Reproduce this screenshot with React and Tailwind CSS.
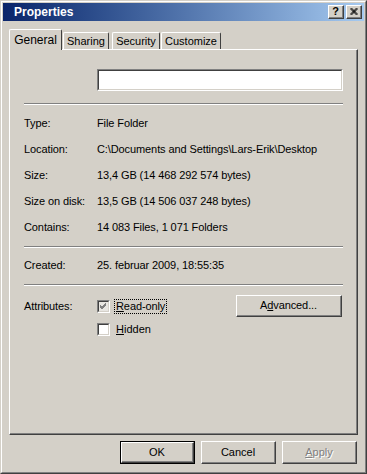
import React from "react";

const font = { fontFamily: '"Liberation Sans", Arial, sans-serif' };

function Bevel({ children, className = "" }) {
  // classic raised 3d frame
  return (
    <div className={`border-t border-l border-t-white border-l-white border-r border-b border-r-[#404040] border-b-[#404040] ${className}`}>
      <div className="h-full w-full border-r border-b border-r-[#808080] border-b-[#808080] flex items-center justify-center">
        {children}
      </div>
    </div>
  );
}

function Button({ children, def, disabled, className = "" }) {
  const inner = (
    <Bevel className="h-full w-full">
      <span className={disabled ? "text-[#808080] [text-shadow:1px_1px_0_#ffffff]" : "text-black"}>{children}</span>
    </Bevel>
  );
  if (def) {
    return <div className={`border border-black ${className}`}>{inner}</div>;
  }
  return <div className={className}>{inner}</div>;
}

function Sunken({ children, className = "" }) {
  return (
    <div className={`border-t border-l border-t-[#808080] border-l-[#808080] border-r border-b border-r-white border-b-white ${className}`}>
      <div className="h-full w-full border-t border-l border-t-[#404040] border-l-[#404040] border-r border-b border-r-[#d4d0c8] border-b-[#d4d0c8]">
        {children}
      </div>
    </div>
  );
}

function Separator({ className = "" }) {
  return <div className={`h-[2px] border-t border-t-[#808080] border-b border-b-white ${className}`} />;
}

function Row({ label, value }) {
  return (
    <div className="flex h-[26px] items-center pl-[14px] tracking-[-0.1px]">
      <div className="w-[73px]">{label}</div>
      <div>{value}</div>
    </div>
  );
}

function Checkbox({ grayed }) {
  return (
    <Sunken className="w-[13px] h-[13px]">
      <div className={`h-full w-full ${grayed ? "bg-[#e8e6e2]" : "bg-white"} flex items-center justify-center`}>
        {grayed && (
          <svg width="7" height="7" viewBox="0 0 7 7">
            <path d="M0 2 L2 4 L6 0 M0 3 L2 5 L6 1 M0 4 L2 6 L6 2" stroke="#808080" strokeWidth="1" fill="none" shapeRendering="crispEdges" />
          </svg>
        )}
      </div>
    </Sunken>
  );
}

function Tab({ children, active, width }) {
  if (active) {
    return (
      <div
        className="relative z-10 h-[21px] -mb-px bg-[#d4d0c8] border-t border-l border-t-white border-l-white border-r border-r-[#404040] rounded-tl-[2px] rounded-tr-[2px] flex items-start justify-center pt-[4px] text-[12px]"
        style={{ width }}
      >
        {children}
      </div>
    );
  }
  return (
    <div
      className="h-[17px] bg-[#d4d0c8] border-t border-l border-t-white border-l-white border-r border-r-[#404040] rounded-tl-[2px] rounded-tr-[2px] flex items-start justify-center pt-[2px]"
      style={{ width }}
    >
      {children}
    </div>
  );
}

export default function App() {
  return (
    <div className="w-[367px] h-[474px] bg-[#d4d0c8] text-[11px] leading-[13px] text-black" style={font}>
      <div className="h-full w-full border-t border-l border-t-[#d4d0c8] border-l-[#d4d0c8] border-r border-b border-r-[#404040] border-b-[#404040]">
        <div className="h-full w-full border-t border-l border-t-white border-l-white border-r border-b border-r-[#808080] border-b-[#808080] p-px flex flex-col">
          {/* title bar */}
          <div className="h-[18px] flex items-center justify-between bg-gradient-to-r from-[#0a246a] to-[#a6caf0] pl-[11px] pr-[2px]">
            <span className="text-white font-bold text-[12px]">Properties</span>
            <div className="flex gap-[2px]">
              <Bevel className="w-[16px] h-[14px] bg-[#d4d0c8]">
                <span className="font-bold text-[11px] leading-none text-black">?</span>
              </Bevel>
              <Bevel className="w-[16px] h-[14px] bg-[#d4d0c8]">
                <svg width="8" height="7" viewBox="0 0 8 7">
                  <path d="M0.5 0 L7.5 7 M1.5 0 L7.5 6 M0.5 1 L6.5 7 M7.5 0 L0.5 7 M6.5 0 L0.5 6 M7.5 1 L1.5 7" stroke="#000" strokeWidth="0.8" fill="none" />
                </svg>
              </Bevel>
            </div>
          </div>

          {/* tabs */}
          <div className="mt-[8px] ml-[6px] flex items-end h-[20px] gap-px">
            <Tab active width={53}>General</Tab>
            <Tab width={46}>Sharing</Tab>
            <div className="w-px" />
            <Tab width={48}>Security</Tab>
            <Tab width={60}>Customize</Tab>
          </div>

          {/* panel */}
          <div className="ml-[6px] w-[349px] h-[386px] border-t border-l border-t-white border-l-white border-r border-b border-r-[#404040] border-b-[#404040]">
            <div className="h-full w-full border-r border-b border-r-[#808080] border-b-[#808080] flex flex-col">
              <Sunken className="mt-[19px] ml-[87px] w-[246px] h-[22px]">
                <div className="h-full w-full bg-white" />
              </Sunken>
              <Separator className="mt-[12px] ml-[14px] w-[319px]" />
              <div className="mt-[5px]">
                <Row label="Type:" value="File Folder" />
                <Row label="Location:" value="C:\Documents and Settings\Lars-Erik\Desktop" />
                <Row label="Size:" value="13,4 GB (14 468 292 574 bytes)" />
                <Row label="Size on disk:" value="13,5 GB (14 506 037 248 bytes)" />
                <Row label="Contains:" value="14 083 Files, 1 071 Folders" />
              </div>
              <Separator className="mt-[6px] ml-[14px] w-[319px]" />
              <div className="mt-[4px]">
                <Row label="Created:" value="25. februar 2009, 18:55:35" />
              </div>
              <Separator className="mt-[6px] ml-[14px] w-[319px]" />
              <div className="mt-[9px] flex h-[22px] items-center pl-[14px] tracking-[-0.1px]">
                <div className="w-[73px]">Attributes:</div>
                <Checkbox grayed />
                <span className="ml-[4px] px-[2px] py-[1px] outline-1 outline-dotted outline-black -outline-offset-1">
                  <span className="underline">R</span>ead-only
                </span>
                <Button className="ml-auto mr-[14px] w-[106px] h-[22px]">
                  A<span className="underline">d</span>vanced...
                </Button>
              </div>
              <div className="mt-[5px] flex items-center pl-[87px] h-[14px]">
                <Checkbox />
                <span className="ml-[6px]">
                  <span className="underline">H</span>idden
                </span>
              </div>
            </div>
          </div>

          {/* buttons */}
          <div className="mt-[6px] ml-[117px] flex gap-[6px]">
            <Button def className="w-[75px] h-[23px]">OK</Button>
            <Button className="w-[75px] h-[23px]">Cancel</Button>
            <Button disabled className="w-[75px] h-[23px]">
              <span className="underline">A</span>pply
            </Button>
          </div>
        </div>
      </div>
    </div>
  );
}
